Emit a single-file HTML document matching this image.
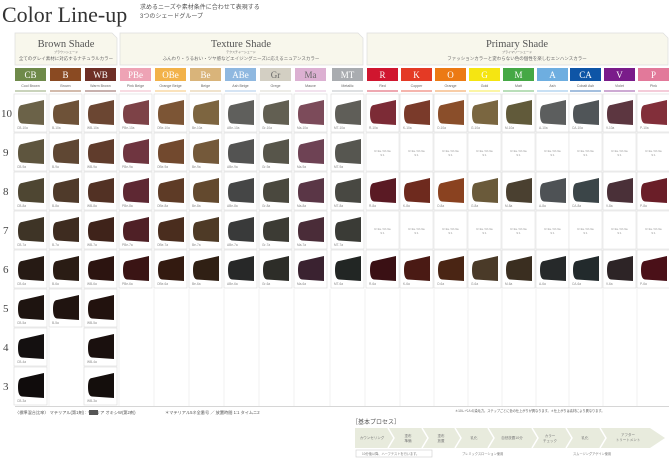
<!DOCTYPE html>
<html><head><meta charset="utf-8"><style>
html,body{margin:0;padding:0;background:#fff;}
svg{display:block;}
.t{font-family:"Liberation Serif","Noto Serif CJK SC",serif;}
.j{font-family:"Liberation Sans","Noto Sans CJK JP",sans-serif;}
</style></head><body>
<svg width="669" height="458" viewBox="0 0 669 458" xmlns="http://www.w3.org/2000/svg">
<defs>
<g id="c"><rect x="-1" y="0" width="33" height="38" fill="#fff" stroke="#dedede" stroke-width=".7"/><path d="M7,11 L29,6 L29,31 L7,29.5 Q3,29 3,20 Q3,11 7,11Z"/></g>
<g id="e"><rect x="-1" y="0" width="33" height="38" fill="#fff" stroke="#e4e4e4" stroke-width=".7"/><text x="15.5" y="19" font-size="3" fill="#999" text-anchor="middle" class="j">R-9a / Ri-9a</text><text x="15.5" y="23" font-size="3" fill="#999" text-anchor="middle" class="j">9:1</text></g>
</defs>
<text x="2" y="22" font-size="22" fill="#333" class="t">Color Line-up</text>
<text x="140" y="9" font-size="6" fill="#555" class="j">求めるニーズや素材条件に合わせて表現する</text>
<text x="140" y="18" font-size="6" fill="#555" class="j">3つのシェードグループ</text>

<path d="M15,33 H112 L117,38 V65 H15Z" fill="#f8f7ec" stroke="#ddd" stroke-width=".7"/>
<path d="M120,33 H358 L363,38 V65 H120Z" fill="#f8f7ec" stroke="#ddd" stroke-width=".7"/>
<path d="M367,33 H663 L668,38 V65 H367Z" fill="#f8f7ec" stroke="#ddd" stroke-width=".7"/>
<g class="t" fill="#555" text-anchor="middle">
<text x="66" y="47" font-size="10.5">Brown Shade</text>
<text x="241" y="47" font-size="10.5">Texture Shade</text>
<text x="517" y="47" font-size="10.5">Primary Shade</text>
</g>
<g class="j" fill="#666" text-anchor="middle">
<text x="66" y="53" font-size="3">ブラウンシェード</text>
<text x="241" y="53" font-size="3">テクスチャーシェード</text>
<text x="517" y="53" font-size="3">プライマリーシェード</text>
<text x="66" y="60" font-size="4.5">全てのグレイ素材に対応するナチュラルカラー</text>
<text x="241" y="60" font-size="4.5">ふんわり・うるおい・ツヤ感などエイジングニーズに応えるニュアンスカラー</text>
<text x="517" y="60" font-size="4.5">ファッションカラーと変わらない色の個性を楽しむエンハンスカラー</text>
</g>

<g class="t" font-size="9" fill="#fff" text-anchor="middle">
<rect x="15" y="68" width="31" height="13" fill="#6f8a4a"/><text x="30.5" y="78">CB</text>
<rect x="50" y="68" width="31" height="13" fill="#8a4a22"/><text x="65.5" y="78">B</text>
<rect x="85" y="68" width="31" height="13" fill="#6e2f26"/><text x="100.5" y="78">WB</text>
<rect x="120" y="68" width="31" height="13" fill="#eea3b5"/><text x="135.5" y="78">PBe</text>
<rect x="155" y="68" width="31" height="13" fill="#f2b24a"/><text x="170.5" y="78">OBe</text>
<rect x="190" y="68" width="31" height="13" fill="#d9b47a"/><text x="205.5" y="78">Be</text>
<rect x="225" y="68" width="31" height="13" fill="#8fb8e0"/><text x="240.5" y="78">ABe</text>
<rect x="260" y="68" width="31" height="13" fill="#d3cfc3"/><text x="275.5" y="78" fill="#666">Gr</text>
<rect x="295" y="68" width="31" height="13" fill="#dcb0d2"/><text x="310.5" y="78" fill="#666">Ma</text>
<rect x="332" y="68" width="31" height="13" fill="#a9acb0"/><text x="347.5" y="78">MT</text>
<rect x="367" y="68" width="31" height="13" fill="#d0162f"/><text x="382.5" y="78">R</text>
<rect x="401" y="68" width="31" height="13" fill="#e43a25"/><text x="416.5" y="78">K</text>
<rect x="435" y="68" width="31" height="13" fill="#ec7a14"/><text x="450.5" y="78">O</text>
<rect x="469" y="68" width="31" height="13" fill="#f5e512"/><text x="484.5" y="78">G</text>
<rect x="503" y="68" width="31" height="13" fill="#45a845"/><text x="518.5" y="78">M</text>
<rect x="537" y="68" width="31" height="13" fill="#6eaee0"/><text x="552.5" y="78">A</text>
<rect x="570" y="68" width="31" height="13" fill="#0e55a6"/><text x="585.5" y="78">CA</text>
<rect x="604" y="68" width="31" height="13" fill="#7a1c8a"/><text x="619.5" y="78">V</text>
<rect x="638" y="68" width="31" height="13" fill="#e2799a"/><text x="653.5" y="78">P</text>
</g>
<g class="j" font-size="3.6" fill="#666" text-anchor="middle">
<text x="30.5" y="87">Cool Brown</text><text x="65.5" y="87">Brown</text><text x="100.5" y="87">Warm Brown</text>
<text x="135.5" y="87">Pink Beige</text><text x="170.5" y="87">Orange Beige</text><text x="205.5" y="87">Beige</text>
<text x="240.5" y="87">Ash Beige</text><text x="275.5" y="87">Grege</text><text x="310.5" y="87">Mauve</text>
<text x="347.5" y="87">Metallic</text><text x="382.5" y="87">Red</text><text x="416.5" y="87">Copper</text>
<text x="450.5" y="87">Orange</text><text x="484.5" y="87">Gold</text><text x="518.5" y="87">Matt</text>
<text x="552.5" y="87">Ash</text><text x="585.5" y="87">Cobalt Ash</text><text x="619.5" y="87">Violet</text><text x="653.5" y="87">Pink</text>
</g>
<g stroke-width=".8">
<line x1="15" x2="46" y1="91" y2="91" stroke="#6f8a4a"/><line x1="50" x2="81" y1="91" y2="91" stroke="#8a4a22"/><line x1="85" x2="116" y1="91" y2="91" stroke="#6e2f26"/>
<line x1="120" x2="151" y1="91" y2="91" stroke="#eea3b5"/><line x1="155" x2="186" y1="91" y2="91" stroke="#f2b24a"/><line x1="190" x2="221" y1="91" y2="91" stroke="#d9b47a"/>
<line x1="225" x2="256" y1="91" y2="91" stroke="#8fb8e0"/><line x1="260" x2="291" y1="91" y2="91" stroke="#cfcbbf"/><line x1="295" x2="326" y1="91" y2="91" stroke="#dcb0d2"/>
<line x1="332" x2="363" y1="91" y2="91" stroke="#a9acb0"/><line x1="367" x2="398" y1="91" y2="91" stroke="#d0162f"/><line x1="401" x2="432" y1="91" y2="91" stroke="#e43a25"/>
<line x1="435" x2="466" y1="91" y2="91" stroke="#ec7a14"/><line x1="469" x2="500" y1="91" y2="91" stroke="#f5e512"/><line x1="503" x2="534" y1="91" y2="91" stroke="#45a845"/>
<line x1="537" x2="568" y1="91" y2="91" stroke="#6eaee0"/><line x1="570" x2="601" y1="91" y2="91" stroke="#0e55a6"/><line x1="604" x2="635" y1="91" y2="91" stroke="#7a1c8a"/><line x1="638" x2="669" y1="91" y2="91" stroke="#e2799a"/>
</g>

<g stroke="#ebebeb" stroke-width=".7">
<line x1="119" x2="119" y1="289" y2="406"/><line x1="154" x2="154" y1="289" y2="406"/><line x1="189" x2="189" y1="289" y2="406"/><line x1="224" x2="224" y1="289" y2="406"/><line x1="259" x2="259" y1="289" y2="406"/><line x1="294" x2="294" y1="289" y2="406"/><line x1="330" x2="330" y1="289" y2="406"/><line x1="365" x2="365" y1="289" y2="406"/><line x1="400" x2="400" y1="289" y2="406"/><line x1="434" x2="434" y1="289" y2="406"/><line x1="468" x2="468" y1="289" y2="406"/><line x1="502" x2="502" y1="289" y2="406"/><line x1="536" x2="536" y1="289" y2="406"/><line x1="569" x2="569" y1="289" y2="406"/><line x1="603" x2="603" y1="289" y2="406"/><line x1="637" x2="637" y1="289" y2="406"/>
<line x1="49" x2="49" y1="328" y2="406"/>
</g>
<line x1="15" x2="669" y1="406.5" y2="406.5" stroke="#c8c8c8" stroke-width=".8"/>

<g class="t" font-size="11" fill="#444">
<text x="1" y="117">10</text><text x="3" y="156">9</text><text x="3" y="195">8</text><text x="3" y="234">7</text><text x="3" y="273">6</text><text x="3" y="312">5</text><text x="3" y="351">4</text><text x="3" y="390">3</text>
</g>

<g transform="translate(0,94)">
<use href="#c" x="15" fill="#6b6248"/><use href="#c" x="50" fill="#6e5238"/><use href="#c" x="85" fill="#6b4632"/><use href="#c" x="120" fill="#7d4247"/><use href="#c" x="155" fill="#7c5535"/><use href="#c" x="190" fill="#7d6540"/><use href="#c" x="225" fill="#5f5f5c"/><use href="#c" x="260" fill="#625f52"/><use href="#c" x="295" fill="#7c4b5a"/><use href="#c" x="332" fill="#5f5e58"/><use href="#c" x="367" fill="#7c2b36"/><use href="#c" x="401" fill="#7a3a2a"/><use href="#c" x="435" fill="#8a4e2a"/><use href="#c" x="469" fill="#7a6640"/><use href="#c" x="503" fill="#615a3a"/><use href="#c" x="537" fill="#5c5e5e"/><use href="#c" x="570" fill="#505558"/><use href="#c" x="604" fill="#5c3640"/><use href="#c" x="638" fill="#822f3a"/>
<g class="j" font-size="3.2" fill="#888"><text x="17" y="35">CB-10a</text><text x="52" y="35">B-10a</text><text x="87" y="35">WB-10a</text><text x="122" y="35">PBe-10a</text><text x="157" y="35">OBe-10a</text><text x="192" y="35">Be-10a</text><text x="227" y="35">ABe-10a</text><text x="262" y="35">Gr-10a</text><text x="297" y="35">Ma-10a</text><text x="334" y="35">MT-10a</text><text x="369" y="35">R-10a</text><text x="403" y="35">K-10a</text><text x="437" y="35">O-10a</text><text x="471" y="35">G-10a</text><text x="505" y="35">M-10a</text><text x="539" y="35">A-10a</text><text x="572" y="35">CA-10a</text><text x="606" y="35">V-10a</text><text x="640" y="35">P-10a</text></g>
</g>
<g transform="translate(0,133)">
<use href="#c" x="15" fill="#5e553e"/><use href="#c" x="50" fill="#5f4733"/><use href="#c" x="85" fill="#603c2c"/><use href="#c" x="120" fill="#6f3540"/><use href="#c" x="155" fill="#72492e"/><use href="#c" x="190" fill="#74593a"/><use href="#c" x="225" fill="#535352"/><use href="#c" x="260" fill="#57554a"/><use href="#c" x="295" fill="#6e4254"/><use href="#c" x="332" fill="#565650"/>
<use href="#e" x="367"/><use href="#e" x="401"/><use href="#e" x="435"/><use href="#e" x="469"/><use href="#e" x="503"/><use href="#e" x="537"/><use href="#e" x="570"/><use href="#e" x="604"/><use href="#e" x="638"/>
<g class="j" font-size="3.2" fill="#888"><text x="17" y="35">CB-9a</text><text x="52" y="35">B-9a</text><text x="87" y="35">WB-9a</text><text x="122" y="35">PBe-9a</text><text x="157" y="35">OBe-9a</text><text x="192" y="35">Be-9a</text><text x="227" y="35">ABe-9a</text><text x="262" y="35">Gr-9a</text><text x="297" y="35">Ma-9a</text><text x="334" y="35">MT-9a</text></g>
</g>
<g transform="translate(0,172)">
<use href="#c" x="15" fill="#4e4632"/><use href="#c" x="50" fill="#4f3a2a"/><use href="#c" x="85" fill="#523124"/><use href="#c" x="120" fill="#5e2833"/><use href="#c" x="155" fill="#5e3b26"/><use href="#c" x="190" fill="#63492e"/><use href="#c" x="225" fill="#454646"/><use href="#c" x="260" fill="#4a483e"/><use href="#c" x="295" fill="#5a3646"/><use href="#c" x="332" fill="#484842"/><use href="#c" x="367" fill="#5a1a24"/><use href="#c" x="401" fill="#6e2a1e"/><use href="#c" x="435" fill="#8a4220"/><use href="#c" x="469" fill="#6a5a3a"/><use href="#c" x="503" fill="#4a4030"/><use href="#c" x="537" fill="#4e5255"/><use href="#c" x="570" fill="#3b4548"/><use href="#c" x="604" fill="#4a3038"/><use href="#c" x="638" fill="#6a1e28"/>
<g class="j" font-size="3.2" fill="#888"><text x="17" y="35">CB-8a</text><text x="52" y="35">B-8a</text><text x="87" y="35">WB-8a</text><text x="122" y="35">PBe-8a</text><text x="157" y="35">OBe-8a</text><text x="192" y="35">Be-8a</text><text x="227" y="35">ABe-8a</text><text x="262" y="35">Gr-8a</text><text x="297" y="35">Ma-8a</text><text x="334" y="35">MT-8a</text><text x="369" y="35">R-8a</text><text x="403" y="35">K-8a</text><text x="437" y="35">O-8a</text><text x="471" y="35">G-8a</text><text x="505" y="35">M-8a</text><text x="539" y="35">A-8a</text><text x="572" y="35">CA-8a</text><text x="606" y="35">V-8a</text><text x="640" y="35">P-8a</text></g>
</g>
<g transform="translate(0,211)">
<use href="#c" x="15" fill="#3e3426"/><use href="#c" x="50" fill="#3e2c20"/><use href="#c" x="85" fill="#3f231a"/><use href="#c" x="120" fill="#4f2026"/><use href="#c" x="155" fill="#4a2d1e"/><use href="#c" x="190" fill="#4e3a26"/><use href="#c" x="225" fill="#393a3a"/><use href="#c" x="260" fill="#3c3b34"/><use href="#c" x="295" fill="#4a2c38"/><use href="#c" x="332" fill="#3a3b36"/>
<use href="#e" x="367"/><use href="#e" x="401"/><use href="#e" x="435"/><use href="#e" x="469"/><use href="#e" x="503"/><use href="#e" x="537"/><use href="#e" x="570"/><use href="#e" x="604"/><use href="#e" x="638"/>
<g class="j" font-size="3.2" fill="#888"><text x="17" y="35">CB-7a</text><text x="52" y="35">B-7a</text><text x="87" y="35">WB-7a</text><text x="122" y="35">PBe-7a</text><text x="157" y="35">OBe-7a</text><text x="192" y="35">Be-7a</text><text x="227" y="35">ABe-7a</text><text x="262" y="35">Gr-7a</text><text x="297" y="35">Ma-7a</text><text x="334" y="35">MT-7a</text></g>
</g>
<g transform="translate(0,250)">
<use href="#c" x="15" fill="#261a14"/><use href="#c" x="50" fill="#2a1c14"/><use href="#c" x="85" fill="#2c1410"/><use href="#c" x="120" fill="#3a1414"/><use href="#c" x="155" fill="#331a10"/><use href="#c" x="190" fill="#302014"/><use href="#c" x="225" fill="#272828"/><use href="#c" x="260" fill="#2d2d28"/><use href="#c" x="295" fill="#3a2230"/><use href="#c" x="332" fill="#222624"/><use href="#c" x="367" fill="#3a1014"/><use href="#c" x="401" fill="#4a1a14"/><use href="#c" x="435" fill="#4a2514"/><use href="#c" x="469" fill="#4a3a28"/><use href="#c" x="503" fill="#3a2e20"/><use href="#c" x="537" fill="#26292a"/><use href="#c" x="570" fill="#222a2c"/><use href="#c" x="604" fill="#2d2426"/><use href="#c" x="638" fill="#4a1018"/>
<g class="j" font-size="3.2" fill="#888"><text x="17" y="35">CB-6a</text><text x="52" y="35">B-6a</text><text x="87" y="35">WB-6a</text><text x="122" y="35">PBe-6a</text><text x="157" y="35">OBe-6a</text><text x="192" y="35">Be-6a</text><text x="227" y="35">ABe-6a</text><text x="262" y="35">Gr-6a</text><text x="297" y="35">Ma-6a</text><text x="334" y="35">MT-6a</text><text x="369" y="35">R-6a</text><text x="403" y="35">K-6a</text><text x="437" y="35">O-6a</text><text x="471" y="35">G-6a</text><text x="505" y="35">M-6a</text><text x="539" y="35">A-6a</text><text x="572" y="35">CA-6a</text><text x="606" y="35">V-6a</text><text x="640" y="35">P-6a</text></g>
</g>
<g transform="translate(0,289)">
<use href="#c" x="15" fill="#1e1410"/><use href="#c" x="50" fill="#201410"/><use href="#c" x="85" fill="#22120e"/>
<g class="j" font-size="3.2" fill="#888"><text x="17" y="35">CB-5a</text><text x="52" y="35">B-5a</text><text x="87" y="35">WB-5a</text></g>
</g>
<g transform="translate(0,328)">
<use href="#c" x="15" fill="#141010"/><use href="#c" x="85" fill="#1a100e"/>
<g class="j" font-size="3.2" fill="#888"><text x="17" y="35">CB-4a</text><text x="87" y="35">WB-4a</text></g>
</g>
<g transform="translate(0,367)">
<use href="#c" x="15" fill="#100c0c"/><use href="#c" x="85" fill="#140e0c"/>
<g class="j" font-size="3.2" fill="#888"><text x="17" y="35">CB-3a</text><text x="87" y="35">WB-3a</text></g>
</g>

<g class="j" font-size="4.2" fill="#555">
<text x="15" y="414">〈標準混合比率〉 マテリアル(第1剤) : マテリア オキシW(第2剤)</text>
<rect x="89" y="410" width="9" height="5" fill="#555"/>
<text x="165" y="414">＊マテリアル5ネ全番号 ／ 放置時間 1:1 タイムニ2</text>
<text x="455" y="412" font-size="3.2">＊10レベルの染毛力。ステップごとに色の仕上がりが異なります。＊仕上がりは素材により異なります。</text>
<text x="352" y="424" font-size="6">［基本プロセス］</text>
</g>
<path d="M355,428 H650 L665,438 L650,448 H355Z" fill="#e8ebdd"/>
<g fill="none" stroke="#fff" stroke-width="1.5">
<path d="M388,428 L394,438 L388,448"/><path d="M422,428 L428,438 L422,448"/><path d="M455,428 L461,438 L455,448"/><path d="M488,428 L494,438 L488,448"/><path d="M532,428 L538,438 L532,448"/><path d="M566,428 L572,438 L566,448"/><path d="M600,428 L606,438 L600,448"/>
</g>
<g class="j" font-size="3.5" fill="#777" text-anchor="middle">
<text x="372" y="439">カウンセリング</text><text x="408" y="437">塗布</text><text x="408" y="442">準備</text><text x="441" y="437">塗布</text><text x="441" y="442">放置</text><text x="474" y="439">乳化</text><text x="512" y="439">自然放置10分</text><text x="550" y="437">カラー</text><text x="550" y="442">チェック</text><text x="585" y="439">乳化</text><text x="628" y="436">アフター</text><text x="628" y="441">トリートメント</text>
</g>
<rect x="356" y="450" width="76" height="7" fill="#fff" stroke="#ccc" stroke-width=".6"/>
<g class="j" font-size="3.2" fill="#777"><text x="362" y="455">10分後以降、ハーフテストを行います。</text><text x="462" y="455">プレミックスローション使用</text><text x="573" y="455">スムージングアゲイン使用</text></g>
</svg>
</body></html>
